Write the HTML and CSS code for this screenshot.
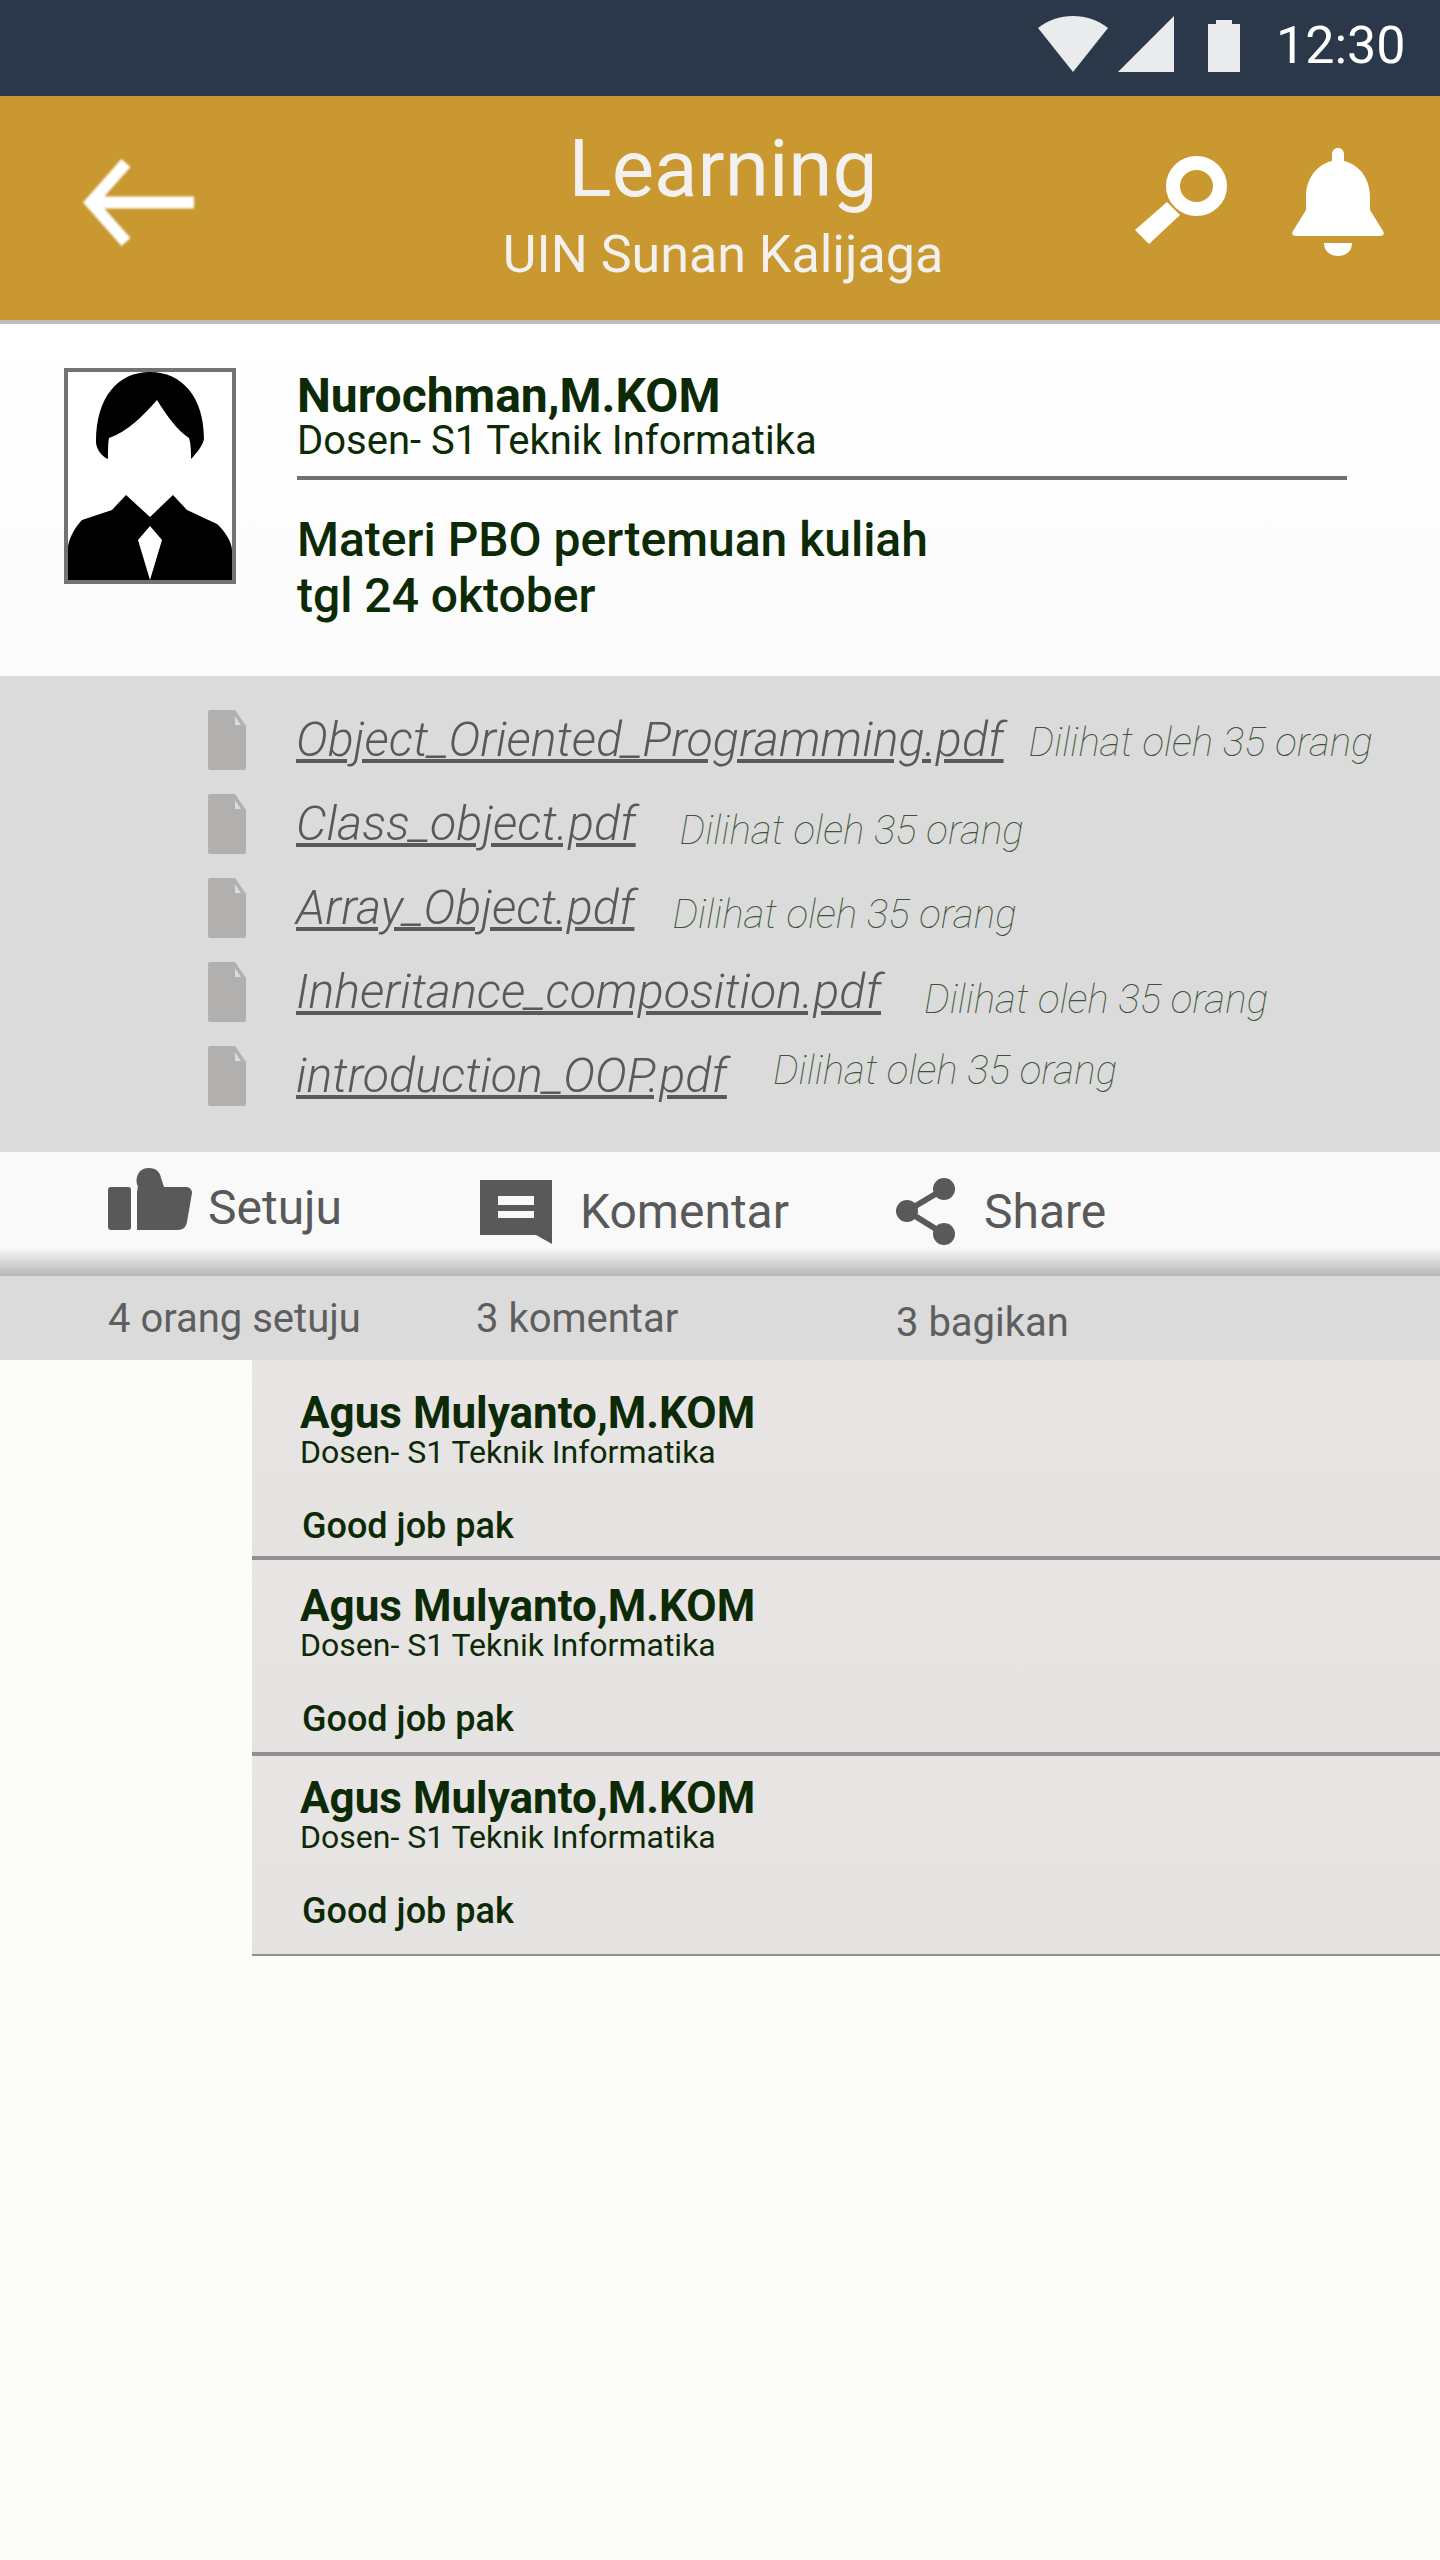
FILE: index.html
```html
<!DOCTYPE html>
<html lang="id">
<head>
  <meta charset="UTF-8">
  <meta name="viewport" content="width=device-width, initial-scale=1.0">
  <title>Learning - UIN Sunan Kalijaga</title>
  <link rel="stylesheet" href="styles.css">
</head>
<body>
  <div class="status-bar">
    <svg class="st-wifi" viewBox="0 0 70 56"><path d="M0 12C10 4 22 0 35 0s25 4 35 12L35 56z"/></svg>
    <svg class="st-signal" viewBox="0 0 56 56"><path d="M56 0V56H0z"/></svg>
    <svg class="st-battery" viewBox="0 0 32 52"><path d="M8 0H24V4H32V52H0V4H8z"/></svg>
    <span class="st-time">12:30</span>
  </div>

  <header class="app-bar">
    <svg class="ic-back" viewBox="0 0 111 89"><path d="M111 44.500H8M43 5 8 44.500 43 84" fill="none" stroke="#fff" stroke-width="12"/></svg>
    <div class="app-title">
      <div class="app-title-main">Learning</div>
      <div class="app-title-sub">UIN Sunan Kalijaga</div>
    </div>
    <svg class="ic-search" viewBox="0 0 93 88">
      <ellipse cx="61.500" cy="30" rx="23.500" ry="23" fill="none" stroke="#fff" stroke-width="14"/>
      <path d="M0 74 32 46 45 59 14 88z" fill="#fff"/>
    </svg>
    <svg class="ic-bell" viewBox="0 0 92 108">
      <path d="M46 0c3.300 0 6 2.700 6 6v7C68 17 78 31 78 49V62L91 83C93 87 91 88 87 88H5C1 88-1 87 1 83L14 62V49C14 31 24 17 40 13V6C40 2.700 42.700 0 46 0z" fill="#fff"/>
      <path d="M32 95H60C60 103 54 108 46 108S32 103 32 95z" fill="#fff"/>
    </svg>
  </header>

  <section class="post">
    <div class="avatar">
      <svg viewBox="68 372 164 208">
        <path d="M150 372c-32 0-54 25-54 70 0 6 5 14 12 17 0-8 0-16 1-21 18-6 34-22 48-38 10 16 20 30 32 38 2 6 2 14 2 21 5-5 12-14 13-20 0-42-22-67-54-67z"/>
        <path d="M126 495 150 517 173 495 187 510 217 524C224 530 232 542 232 550V580H68V546C70 536 76 526 82 520L112 510z"/>
        <path class="tie" d="M150 526 162 540 150 580 138 540z"/>
      </svg>
    </div>
    <div class="post-body">
      <div class="author">Nurochman,M.KOM</div>
      <div class="author-role">Dosen- S1 Teknik Informatika</div>
      <div class="post-title">Materi PBO pertemuan kuliah<br>tgl 24 oktober</div>
    </div>
  </section>

  <section class="files">
    <div class="file-row">
      <svg class="ic-file" viewBox="0 0 38 60"><path d="M2 0H27L38 16V58a2 2 0 0 1-2 2H2a2 2 0 0 1-2-2V2a2 2 0 0 1 2-2z"/><path class="fold" d="M27 6 33 15H27z"/></svg>
      <div class="file-line"><a class="file-name">Object_Oriented_Programming.pdf</a><span class="file-views fv-1">Dilihat oleh 35 orang</span></div>
    </div>
    <div class="file-row">
      <svg class="ic-file" viewBox="0 0 38 60"><path d="M2 0H27L38 16V58a2 2 0 0 1-2 2H2a2 2 0 0 1-2-2V2a2 2 0 0 1 2-2z"/><path class="fold" d="M27 6 33 15H27z"/></svg>
      <div class="file-line"><a class="file-name">Class_object.pdf</a><span class="file-views fv-2">Dilihat oleh 35 orang</span></div>
    </div>
    <div class="file-row">
      <svg class="ic-file" viewBox="0 0 38 60"><path d="M2 0H27L38 16V58a2 2 0 0 1-2 2H2a2 2 0 0 1-2-2V2a2 2 0 0 1 2-2z"/><path class="fold" d="M27 6 33 15H27z"/></svg>
      <div class="file-line"><a class="file-name">Array_Object.pdf</a><span class="file-views fv-3">Dilihat oleh 35 orang</span></div>
    </div>
    <div class="file-row">
      <svg class="ic-file" viewBox="0 0 38 60"><path d="M2 0H27L38 16V58a2 2 0 0 1-2 2H2a2 2 0 0 1-2-2V2a2 2 0 0 1 2-2z"/><path class="fold" d="M27 6 33 15H27z"/></svg>
      <div class="file-line"><a class="file-name">Inheritance_composition.pdf</a><span class="file-views fv-4">Dilihat oleh 35 orang</span></div>
    </div>
    <div class="file-row">
      <svg class="ic-file" viewBox="0 0 38 60"><path d="M2 0H27L38 16V58a2 2 0 0 1-2 2H2a2 2 0 0 1-2-2V2a2 2 0 0 1 2-2z"/><path class="fold" d="M27 6 33 15H27z"/></svg>
      <div class="file-line"><a class="file-name">introduction_OOP.pdf</a><span class="file-views fv-5">Dilihat oleh 35 orang</span></div>
    </div>
  </section>

  <div class="actions">
    <div class="action action-like">
      <svg class="ic-like" viewBox="0 0 84 62"><rect y="19" width="23" height="43" rx="3"/><path d="M29 62V24L30 18C27 14 28 0 41 0 48 0 52 4 53 10L56 19H78C82 19 84 22 84 25L79 54C78 59 75 62 70 62z"/></svg>
      <span>Setuju</span>
    </div>
    <div class="action action-comment">
      <svg class="ic-comment" viewBox="0 0 72 64"><path d="M0 0H72V64L56 55H0zM18 16V25H54V16zM18 31V38H54V31z" fill-rule="evenodd"/></svg>
      <span>Komentar</span>
    </div>
    <div class="action action-share">
      <svg class="ic-share" viewBox="0 0 61 67"><circle cx="48" cy="11" r="11"/><circle cx="11" cy="33" r="11"/><circle cx="48" cy="56" r="11"/><path d="M48 11 11 33 48 56" fill="none" stroke="#595959" stroke-width="6"/></svg>
      <span>Share</span>
    </div>
  </div>

  <div class="counts">
    <span class="count c-like">4 orang setuju</span>
    <span class="count c-comment">3 komentar</span>
    <span class="count c-share">3 bagikan</span>
  </div>

  <section class="comments">
    <div class="comment comment-first">
      <div class="c-name">Agus Mulyanto,M.KOM</div>
      <div class="c-role">Dosen- S1 Teknik Informatika</div>
      <div class="c-text">Good job pak</div>
    </div>
    <div class="comment comment-mid">
      <div class="c-name">Agus Mulyanto,M.KOM</div>
      <div class="c-role">Dosen- S1 Teknik Informatika</div>
      <div class="c-text">Good job pak</div>
    </div>
    <div class="comment comment-last">
      <div class="c-name">Agus Mulyanto,M.KOM</div>
      <div class="c-role">Dosen- S1 Teknik Informatika</div>
      <div class="c-text">Good job pak</div>
    </div>
  </section>
</body>
</html>
```

FILE: styles.css
```css
* { box-sizing: border-box; }
html, body { margin: 0; padding: 0; }
body { width: 1440px; height: 2560px; overflow: hidden; background: #fcfdf9; font-family: Roboto, "Liberation Sans", sans-serif; color: #0d2a06; }
svg { display: block; flex: none; }

.status-bar { height: 96px; background: #2a3849; display: flex; align-items: flex-start; }
.st-wifi { width: 70px; height: 56px; margin: 16px 0 0 1038px; fill: #e9ebec; }
.st-signal { width: 56px; height: 56px; margin: 16px 0 0 10px; fill: #e9ebec; }
.st-battery { width: 32px; height: 52px; margin: 20px 0 0 34px; fill: #e9ebec; }
.st-time { margin: 15px 0 0 36px; font-size: 52px; line-height: 61px; font-weight: 400; color: #fff; }

.app-bar { height: 224px; background: #c99830; box-shadow: 0 4px 0 #bdbdbd; display: flex; align-items: flex-start; position: relative; }
.ic-back { width: 111px; height: 89px; margin: 62px 0 0 83px; filter: blur(0.8px); }
.app-title { width: 726px; margin-left: 166px; text-align: center; color: #f2f1ef; flex: none; }
.app-title-main { margin-top: 26px; font-size: 80px; line-height: 94px; }
.app-title-sub { margin-top: 9px; font-size: 52px; line-height: 60px; }
.ic-search { width: 93px; height: 88px; margin: 60px 0 0 49px; }
.ic-bell { width: 92px; height: 108px; margin: 52px 0 0 64px; }

.post { height: 356px; padding: 48px 0 0 64px; background: linear-gradient(#fff, #fbfbfb); display: flex; align-items: flex-start; }
.avatar { width: 172px; height: 216px; border: 4px solid #737373; background: #fff; flex: none; }
.avatar svg { width: 164px; height: 208px; }
.tie { fill: #fff; }
.post-body { width: 1050px; margin-left: 61px; }
.author { margin-top: 4px; font-size: 48px; line-height: 48px; font-weight: 700; }
.author-role { margin-top: 1px; font-size: 40px; line-height: 40px; padding-bottom: 15px; border-bottom: 4px solid #707070; }
.post-title { margin-top: 32px; font-size: 48px; line-height: 56px; font-weight: 500; }

.files { height: 476px; padding: 26px 0 0 208px; background: #dbdbdb; }
.file-row { height: 84px; display: flex; align-items: flex-start; }
.ic-file { width: 38px; height: 60px; margin-top: 8px; fill: #b1b0ae; }
.fold { fill: #dbdbdb; }
.file-line { margin-left: 50px; padding-top: 7px; white-space: nowrap; line-height: 62px; }
.file-name { font-size: 48.4px; font-weight: 300; font-style: italic; color: #595959; text-decoration: underline; }
.file-views { font-size: 40.4px; line-height: 40px; font-weight: 100; font-style: italic; color: #3c5538; display: inline-block; }
.fv-1 { margin-left: 25px; }
.fv-2 { margin-left: 44px; vertical-align: -4px; }
.fv-3 { margin-left: 38px; vertical-align: -4px; }
.fv-4 { margin-left: 43px; vertical-align: -5px; }
.fv-5 { margin-left: 46px; vertical-align: 8px; }

.actions { height: 124px; background: linear-gradient(#f9f9f9 96px, #b8b8b8 123px); display: flex; align-items: flex-start; color: #595959; font-size: 48px; }
.action { display: flex; align-items: flex-start; line-height: 54px; flex: none; }
.action-like { width: 372px; padding: 16px 0 0 108px; }
.ic-like { width: 84px; height: 62px; fill: #595959; }
.action-like span { margin: 13px 0 0 16px; }
.action-comment { width: 416px; padding: 28px 0 0 108px; }
.ic-comment { width: 72px; height: 64px; fill: #595959; }
.action-comment span { margin: 5px 0 0 28px; }
.action-share { padding: 26px 0 0 108px; }
.ic-share { width: 61px; height: 67px; fill: #595959; }
.action-share span { margin: 7px 0 0 27px; }

.counts { height: 84px; background: #dbdbdb; display: flex; align-items: flex-start; color: #5e5e5e; font-size: 40px; line-height: 47px; }
.count { flex: none; }
.c-like { margin: 19px 0 0 108px; width: 368px; }
.c-comment { margin: 19px 0 0 0; width: 420px; }
.c-share { margin: 23px 0 0 0; }

.comments { margin-left: 252px; }
.comment { background: linear-gradient(#e9e5e5, #e5e2e2); border-bottom: 4px solid #909090; padding-left: 48px; }
.comment-first { height: 200px; padding-top: 29px; }
.comment-mid { height: 196px; padding-top: 22px; }
.comment-last { height: 200px; padding-top: 18px; border-bottom-width: 2px; }
.c-name { font-size: 44px; line-height: 48px; font-weight: 700; }
.c-role { font-size: 32px; line-height: 30px; }
.c-text { margin: 38px 0 0 2px; font-size: 36px; line-height: 42px; font-weight: 500; }
```
